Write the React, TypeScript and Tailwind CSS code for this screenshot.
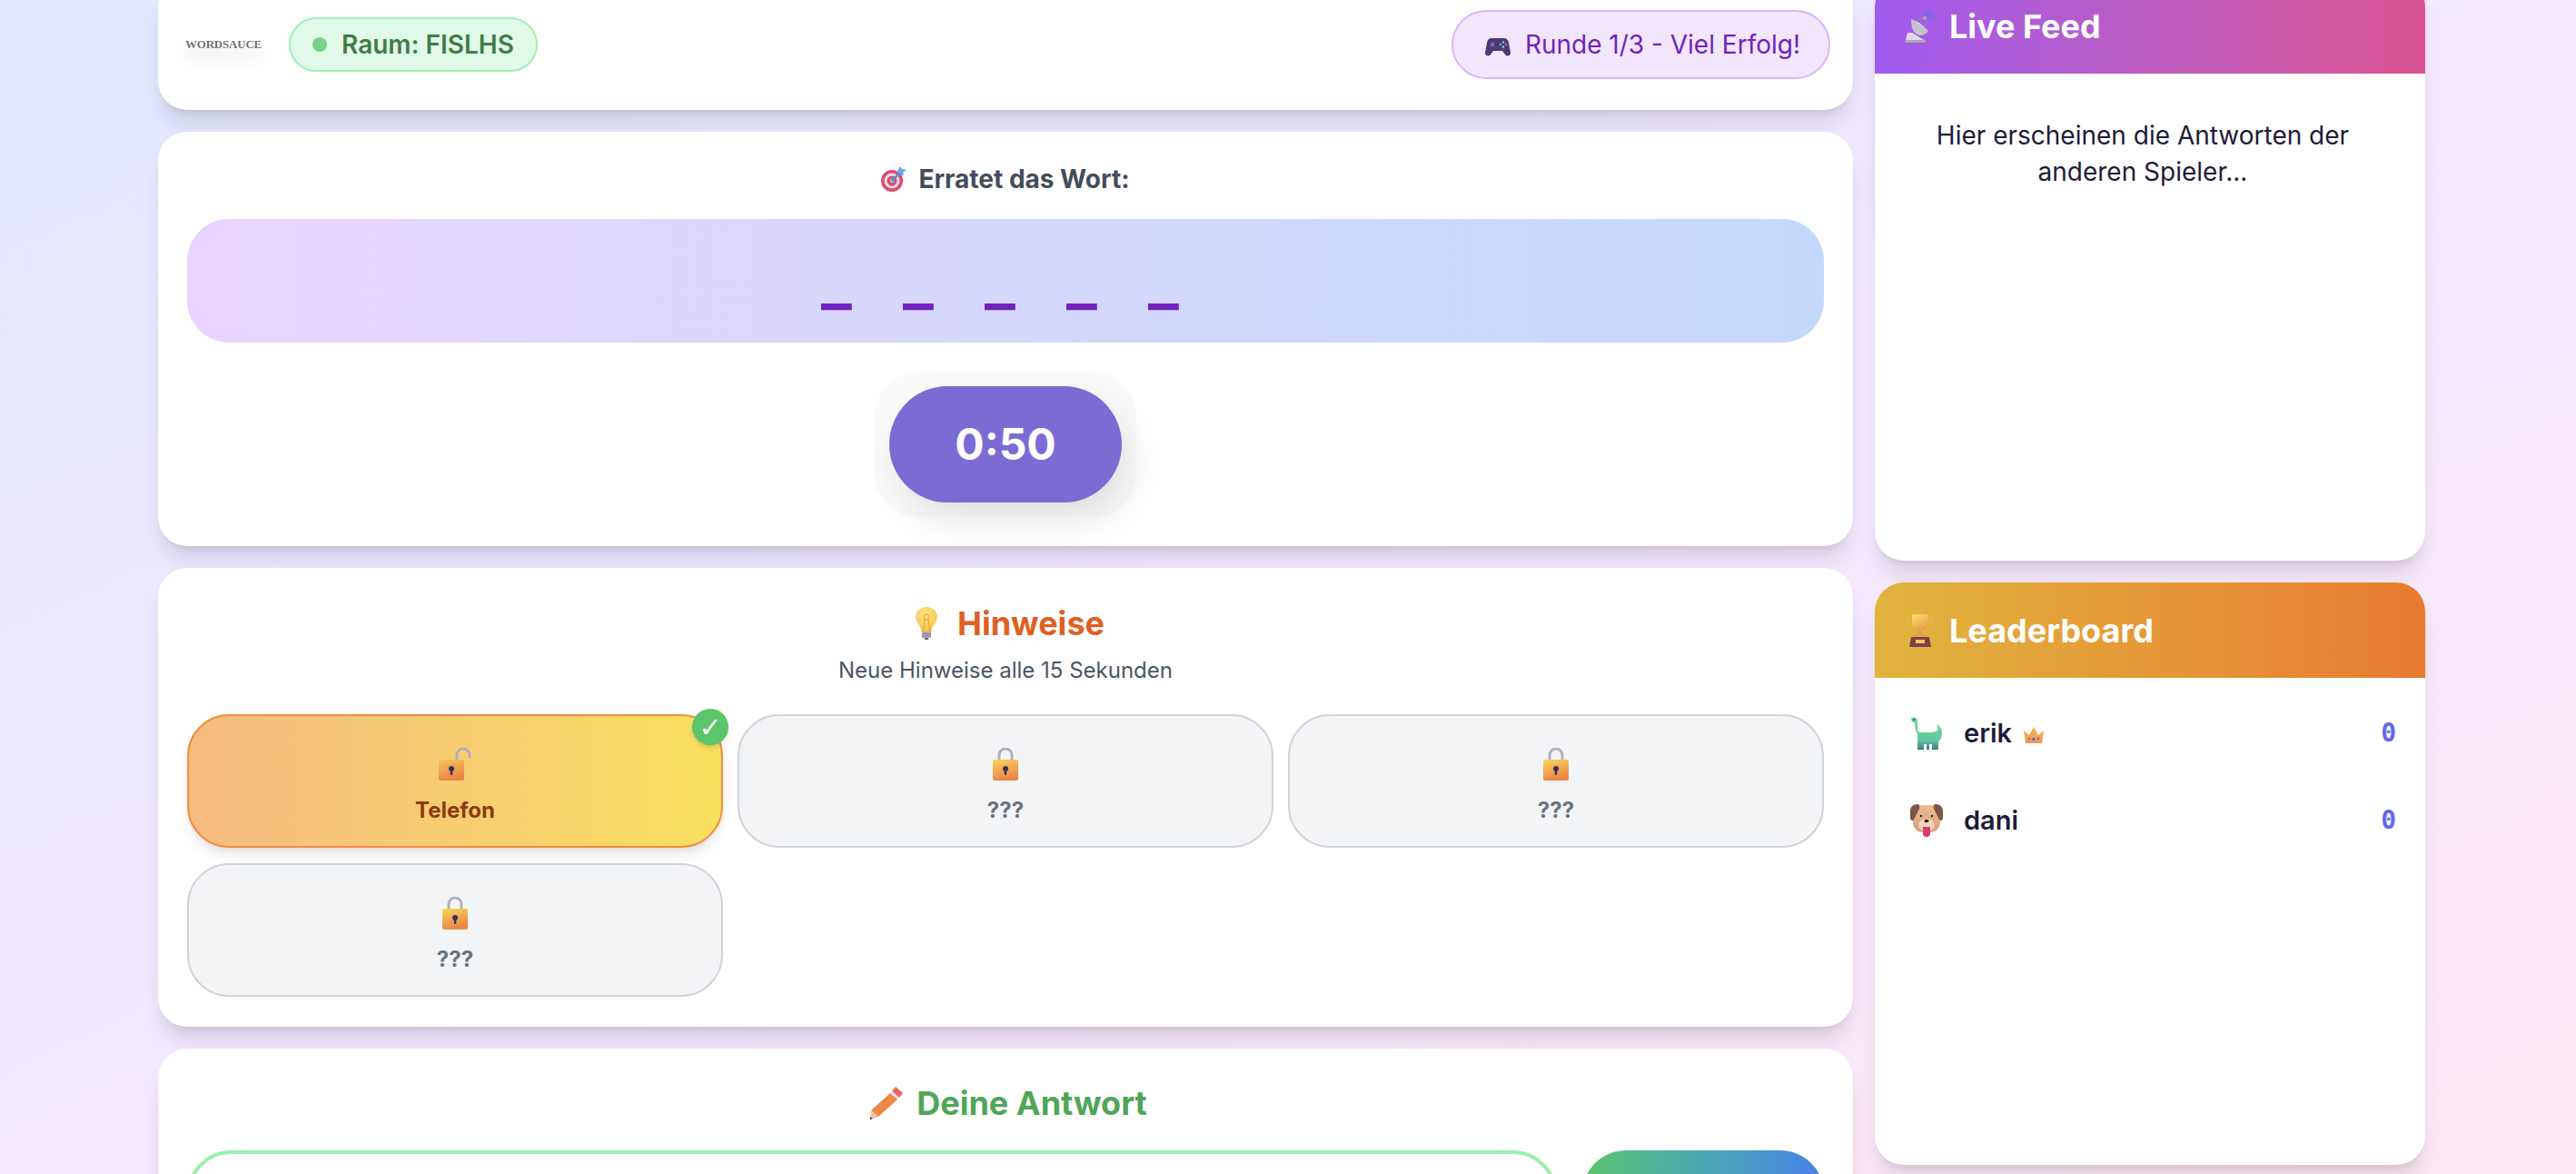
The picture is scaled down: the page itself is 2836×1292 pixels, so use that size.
import { ReactNode } from 'react'

function Lock() {
  return (
    <svg viewBox="0 0 36 36" className="w-9 h-9">
      <defs>
        <linearGradient id="lockBody" x1="0" y1="0" x2="0.3" y2="1">
          <stop offset="0" stopColor="#f9d45c" />
          <stop offset="1" stopColor="#ea8747" />
        </linearGradient>
      </defs>
      <path d="M11 15V8a7 7 0 0 1 14 0v7" fill="none" stroke="#b4aebd" strokeWidth="3" />
      <rect x="4" y="13" width="28" height="23" rx="2" fill="url(#lockBody)" />
      <circle cx="18" cy="23" r="3" fill="#3a2d5f" />
      <rect x="16.8" y="23" width="2.4" height="7" rx="1.2" fill="#3a2d5f" />
    </svg>
  )
}

function OpenLock() {
  return (
    <svg viewBox="0 0 36 36" className="w-9 h-9">
      <defs>
        <linearGradient id="openBody" x1="0" y1="0" x2="0.3" y2="1">
          <stop offset="0" stopColor="#f7c25a" />
          <stop offset="1" stopColor="#ea8747" />
        </linearGradient>
      </defs>
      <path d="M20 13V8a7 7 0 0 1 14 0v3" fill="none" stroke="#b4aebd" strokeWidth="3" />
      <rect x="0" y="13" width="28" height="23" rx="2" fill="url(#openBody)" />
      <circle cx="14" cy="23" r="3" fill="#3a2d5f" />
      <rect x="12.8" y="23" width="2.4" height="7" rx="1.2" fill="#3a2d5f" />
    </svg>
  )
}

function Target() {
  return (
    <svg viewBox="0 0 28 28" className="w-7 h-7">
      <circle cx="12" cy="16" r="12" fill="#dc4c6e" />
      <circle cx="12" cy="16" r="8.5" fill="#ead9e6" />
      <circle cx="12" cy="16" r="5.5" fill="#dc4c6e" />
      <circle cx="12" cy="16" r="2.5" fill="#b9b3c4" />
      <path d="M12 16L22 6" stroke="#4f8fe0" strokeWidth="2.5" />
      <path d="M18 5l3-5 2 3 5 1-4 3 1 3-3 0-1-2z" fill="#5ba9f0" />
    </svg>
  )
}

function Bulb() {
  return (
    <svg viewBox="0 0 24 36" className="w-6 h-9">
      <defs>
        <radialGradient id="bulbGlass" cx="0.45" cy="0.3" r="0.8">
          <stop offset="0" stopColor="#ffe98a" />
          <stop offset="1" stopColor="#f6b93c" />
        </radialGradient>
      </defs>
      <path d="M12 0C5 0 0 5 0 11c0 6 6 9 7 17h10c1-8 7-11 7-17C24 5 19 0 12 0z" fill="url(#bulbGlass)" />
      <path d="M8 27l2-13h4l2 13M9 11a3 3 0 1 0 6 0a3 3 0 1 0-6 0" fill="none" stroke="#e89b2e" strokeWidth="1" />
      <rect x="7" y="27" width="10" height="7" rx="1.5" fill="#b1a4bd" />
      <path d="M7 29.5h10M7 32h10" stroke="#8c7f9c" strokeWidth="1" />
      <rect x="9.5" y="34" width="5" height="2" rx="1" fill="#6f6480" />
    </svg>
  )
}

function Controller() {
  return (
    <svg viewBox="0 0 28 22" className="w-7 h-[22px] mt-[7px]">
      <path d="M7 1h14c3 0 4.5 2 5 5l2 11c.4 3-3.5 5-6 2l-3-4H9l-3 4c-2.5 3-6.4 1-6-2L2 6c.5-3 2-5 5-5z" fill="#4b3a78" />
      <circle cx="8" cy="8" r="2.4" fill="#7b6aa8" />
      <circle cx="20" cy="5.5" r="1.2" fill="#6ad4c8" />
      <circle cx="23" cy="8" r="1.2" fill="#e8637f" />
      <circle cx="17" cy="8" r="1.2" fill="#6ea5ee" />
      <circle cx="20" cy="10.5" r="1.2" fill="#8de08a" />
    </svg>
  )
}

function Dish() {
  return (
    <svg viewBox="0 0 36 36" className="w-9 h-9">
      <path d="M4 25h5l13 8H2z" fill="#dedbe3" />
      <rect x="1" y="33" width="23" height="3" rx="1" fill="#a9a5b3" />
      <path d="M8 10L27 23C22 30 8 32 8 10z" fill="#c6c2cc" />
      <path d="M8 10L27 23L17 14z" fill="#e1dee5" />
      <path d="M12 12L23 9L24 18" fill="none" stroke="#8e8a97" strokeWidth="1" />
      <circle cx="23" cy="9" r="2" fill="#a8a4b0" />
      <path d="M23 5a6 6 0 0 1 6 6M23 2a9 9 0 0 1 9 9" fill="none" stroke="#4d7fe0" strokeWidth="1.5" />
    </svg>
  )
}

function Trophy() {
  return (
    <svg viewBox="0 0 36 36" className="w-9 h-9">
      <defs>
        <linearGradient id="cup" x1="0" y1="0" x2="0.4" y2="1">
          <stop offset="0" stopColor="#fbe36f" />
          <stop offset="1" stopColor="#e4903a" />
        </linearGradient>
      </defs>
      <path d="M9 3H5c-1 6 1 10 6 11M27 3h4c1 6-1 10-6 11" fill="none" stroke="#eab04a" strokeWidth="2" />
      <path d="M9 0h18v9c0 5-4 8-7 9v6h-4v-6c-3-1-7-4-7-9z" fill="url(#cup)" />
      <rect x="12" y="22" width="12" height="3" rx="1" fill="#e9a23f" />
      <path d="M8 25h20l2 11H6z" fill="#7d4150" />
      <rect x="13" y="28" width="10" height="4" fill="#f2c65a" />
    </svg>
  )
}

function Dino() {
  return (
    <svg viewBox="0 0 36 36" className="w-9 h-9">
      <defs>
        <linearGradient id="dino" x1="0" y1="0" x2="0" y2="1">
          <stop offset="0" stopColor="#6fd49c" />
          <stop offset="0.7" stopColor="#63c9a0" />
          <stop offset="1" stopColor="#3c7c8a" />
        </linearGradient>
      </defs>
      <path d="M1 1c2-1 6-1 7 2v11c0 2 2 3 5 3h10c3 0 5-1 7-2 1-2 0-5-1-7 3 1 6 5 6 10 0 4-2 8-4 9v9h-7v-6h-3v6h-3v-6h-3v6H8V19c-2-3-3-8-3-13-3 0-4-2-4-5z" fill="url(#dino)" />
      <circle cx="4" cy="3" r="0.9" fill="#1d3b38" />
    </svg>
  )
}

function Dog() {
  return (
    <svg viewBox="0 0 36 36" className="w-9 h-9">
      <defs>
        <linearGradient id="dogFace" x1="0" y1="0" x2="0" y2="1">
          <stop offset="0" stopColor="#e9bd8f" />
          <stop offset="1" stopColor="#dd9c7c" />
        </linearGradient>
      </defs>
      <rect x="3" y="1" width="30" height="30" rx="11" fill="url(#dogFace)" />
      <path d="M8 0C3 0 0 3 0 8v7c0 3 3 4 4 2l5-10c2-3 2-7-1-7z" fill="#7c5648" />
      <path d="M28 0c5 0 8 3 8 8v7c0 3-3 4-4 2L27 7c-2-3-2-7 1-7z" fill="#7c5648" />
      <circle cx="12" cy="13" r="1.2" fill="#2a1f22" />
      <circle cx="24" cy="13" r="1.2" fill="#2a1f22" />
      <ellipse cx="18" cy="23" rx="9" ry="7" fill="#f2d3b4" />
      <ellipse cx="18" cy="18.5" rx="2.5" ry="1.8" fill="#2a1f22" />
      <path d="M14 25h8v7a4 4 0 0 1-8 0z" fill="#d63a78" />
    </svg>
  )
}

function Crown() {
  return (
    <svg viewBox="0 0 24 20" className="w-6 h-5">
      <defs>
        <linearGradient id="crown" x1="0" y1="0" x2="0" y2="1">
          <stop offset="0" stopColor="#f2b94f" />
          <stop offset="1" stopColor="#ee9656" />
        </linearGradient>
      </defs>
      <path d="M1 5l6 5 5-9 5 9 6-5-2 14H3z" fill="url(#crown)" />
      <circle cx="7" cy="14" r="1.2" fill="#e2405a" />
      <circle cx="12" cy="14.5" r="1.8" fill="#3f76e0" />
      <circle cx="17" cy="14" r="1.2" fill="#e2405a" />
    </svg>
  )
}

function Pencil() {
  return (
    <svg viewBox="0 0 36 36" className="w-9 h-9">
      <path d="M28 0l8 7-4 5-8-7z" fill="#ee6456" />
      <path d="M24 5l8 7-2 2-8-7z" fill="#e4dfe8" />
      <path d="M22 7l8 7L9 33l-8-7z" fill="#ec8744" />
      <path d="M1 26l8 7-9 3z" fill="#eec99a" />
      <path d="M0 33l3 2-3 1z" fill="#3a2550" />
    </svg>
  )
}

function Card({ className = '', children }: { className?: string; children: ReactNode }) {
  return <div className={`bg-white rounded-[32px] shadow-xl ${className}`}>{children}</div>
}

function HintBox({ label, open }: { label: string; open?: boolean }) {
  if (open) {
    return (
      <div className="relative h-[147px] rounded-[46px] border-2 border-[#f08e42] bg-linear-to-r from-[#f4bb80] to-[#f8e05e] shadow-lg flex flex-col items-center pt-[35px] gap-[17px]">
        <OpenLock />
        <span className="text-2xl leading-8 font-bold text-[#8c3a10]">{label}</span>
        <span className="absolute -top-[8px] -right-[8px] w-10 h-10 rounded-full bg-[#5cc46a] text-white text-[30px] font-bold font-['DejaVu_Sans',sans-serif] flex items-center justify-center shadow-md">✓</span>
      </div>
    )
  }
  return (
    <div className="h-[147px] rounded-[46px] border-2 border-[#d1d5db] bg-[#f3f4f6] flex flex-col items-center pt-[35px] gap-[17px]">
      <Lock />
      <span className="text-2xl leading-8 font-bold text-[#6b7280]">{label}</span>
    </div>
  )
}

function ScoreRow({ icon, name, crown }: { icon: ReactNode; name: string; crown?: boolean }) {
  return (
    <div className="h-24 flex items-center pl-[39px] pr-8">
      {icon}
      <span className="ml-[23px] text-[29px] font-semibold text-[#1e1b3a]">{name}</span>
      {crown && <span className="ml-3 mt-1"><Crown /></span>}
      <span className="ml-auto text-[28px] font-bold text-[#6366f1] font-['DejaVu_Sans_Mono',monospace]">0</span>
    </div>
  )
}

export default function App() {
  return (
    <div className="h-[1292px] overflow-hidden bg-linear-to-br from-[#e0e7ff] via-[#f3e8ff] to-[#fce7f3] font-['Inter',sans-serif]">
      <div className="-mt-6 pl-[174px] flex gap-6 items-start">
        <div className="w-[1866px] flex flex-col gap-6 shrink-0">
          <Card className="h-[145px] pl-8 pr-[25px] flex items-center">
            <div className="w-20 h-20 flex items-center justify-center">
              <span className="text-[13px] font-bold tracking-[-0.2px] text-[#6d6f78] font-['Liberation_Serif',serif] drop-shadow-[0_10px_8px_rgba(0,0,0,0.2)]">WORDSAUCE</span>
            </div>
            <div className="ml-8 h-[60px] px-6 rounded-full bg-[#e1f9e8] border-2 border-[#a2efb3] flex items-center gap-4">
              <span className="w-4 h-4 rounded-full bg-[#7bd188]" />
              <span className="text-[28px] font-semibold text-[#3f7d47]">Raum: FISLHS</span>
            </div>
            <div className="ml-auto h-[76px] px-[31px] rounded-full bg-[#f2e6fd] border-2 border-[#d8b4fe] flex items-center gap-3">
              <span className="w-9 flex justify-center"><Controller /></span>
              <span className="text-[28px] text-[#7022c0]">Runde 1/3 - Viel Erfolg!</span>
            </div>
          </Card>

          <Card className="h-[456px] px-8 pt-8">
            <div className="h-10 mb-6 flex items-center justify-center gap-[13px]">
              <Target />
              <span className="text-[28px] font-bold text-[#434c5a]">Erratet das Wort:</span>
            </div>
            <div className="h-[136px] rounded-[46px] bg-linear-to-r from-[#e8d5fd] to-[#c2d9fb] flex items-end justify-center pr-3 pb-[33px]">
              {['a', 'b', 'c', 'd', 'e'].map((k) => (
                <span key={k} className="w-[90px] text-center text-[72px] leading-none font-semibold text-[#7022c0]">_</span>
              ))}
            </div>
            <div className="flex justify-center mt-8">
              <div className="p-4 rounded-[48px] bg-[#f9fafa]">
                <div className="w-64 h-32 rounded-full bg-[#7c6bd3] text-white text-5xl font-bold flex items-center justify-center shadow-[10px_20px_40px_rgba(0,0,0,0.1)]">0:50</div>
              </div>
            </div>
          </Card>

          <Card className="h-[505px] px-8 pt-[33px]">
            <div className="h-14 pl-[10px] flex items-center justify-center gap-[22px]">
              <Bulb />
              <span className="text-4xl font-bold text-[#e05f22]">Hinweise</span>
            </div>
            <div className="mt-[6px] text-center text-2xl leading-9 text-[#4b5563]">Neue Hinweise alle 15 Sekunden</div>
            <div className="mt-[30px] grid grid-cols-3 gap-x-4 gap-y-[17px]">
              <HintBox label="Telefon" open />
              <HintBox label="???" />
              <HintBox label="???" />
              <HintBox label="???" />
            </div>
          </Card>

          <Card className="h-[300px] px-8 pt-8">
            <div className="h-14 pl-[7px] flex items-center justify-center gap-[15px]">
              <Pencil />
              <span className="text-4xl font-bold text-[#4fa657]">Deine Antwort</span>
            </div>
            <div className="mt-6 flex gap-[28px]">
              <div className="flex-1 h-[104px] rounded-[48px] border-4 border-[#9eeeb0] bg-white" />
              <div className="w-[266px] h-[104px] rounded-[48px] bg-linear-to-r from-[#5cc46a] to-[#4a80e8]" />
            </div>
          </Card>
        </div>

        <div className="w-[606px] flex flex-col gap-6 shrink-0">
          <Card className="h-[641px] overflow-hidden">
            <div className="h-[105px] px-8 flex items-center gap-[14px] text-white bg-linear-to-r from-[#9f5aef] to-[#da5390]">
              <Dish />
              <span className="text-4xl font-bold">Live Feed</span>
            </div>
            <p className="pl-6 pr-10 pt-12 text-center text-[28px] leading-10 text-[#1e1b3a]">Hier erscheinen die Antworten der anderen Spieler...</p>
          </Card>
          <Card className="h-[641px] overflow-hidden">
            <div className="h-[105px] px-8 flex items-center gap-[14px] text-white bg-linear-to-r from-[#e0b43e] to-[#e77a31]">
              <Trophy />
              <span className="text-4xl font-bold">Leaderboard</span>
            </div>
            <div className="pt-[13px]">
              <ScoreRow icon={<Dino />} name="erik" crown />
              <ScoreRow icon={<Dog />} name="dani" />
            </div>
          </Card>
        </div>
      </div>
    </div>
  )
}
